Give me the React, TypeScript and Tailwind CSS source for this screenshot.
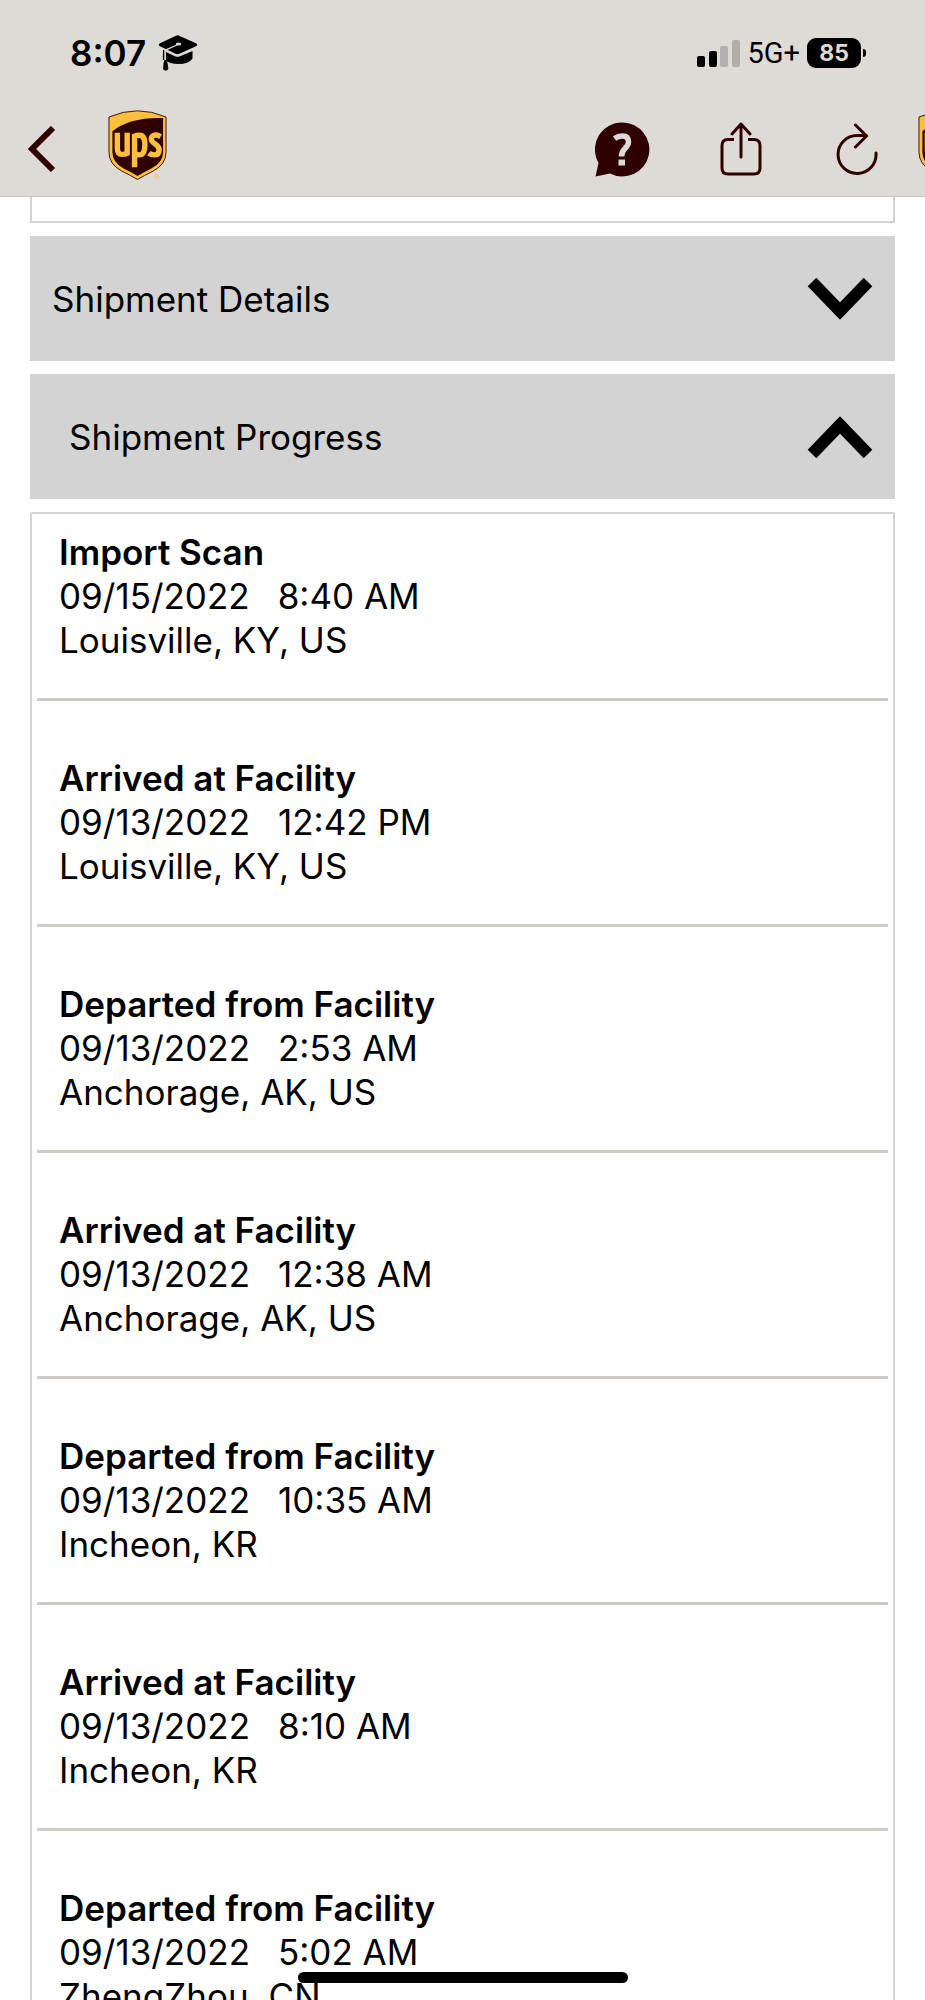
const events = [
  { title: "Import Scan", date: "09/15/2022", time: "8:40 AM", place: "Louisville, KY, US" },
  { title: "Arrived at Facility", date: "09/13/2022", time: "12:42 PM", place: "Louisville, KY, US" },
  { title: "Departed from Facility", date: "09/13/2022", time: "2:53 AM", place: "Anchorage, AK, US" },
  { title: "Arrived at Facility", date: "09/13/2022", time: "12:38 AM", place: "Anchorage, AK, US" },
  { title: "Departed from Facility", date: "09/13/2022", time: "10:35 AM", place: "Incheon, KR" },
  { title: "Arrived at Facility", date: "09/13/2022", time: "8:10 AM", place: "Incheon, KR" },
  { title: "Departed from Facility", date: "09/13/2022", time: "5:02 AM", place: "ZhengZhou, CN" },
];

function Shield({ className }: { className: string }) {
  return (
    <svg viewBox="0 0 60 72" className={className} aria-label="UPS">
      <path
        d="M1 7 Q30 -5.500 59 7 V43 Q59 55 46 62 Q36 67 30 70.500 Q24 67 14 62 Q1 55 1 43 Z"
        fill="#f9bf3f"
        stroke="#3b1512"
        strokeWidth="1"
      />
      <path
        d="M4.500 21.500 Q22 7 56 8 V43 Q56 53 44 59.500 Q36 63.500 30 67 Q24 63.500 16 59.500 Q4.500 53 4.500 43 Z"
        fill="#300000"
      />
      <g fill="none" stroke="#f9bf3f" strokeWidth="5.500">
        <path d="M9.500 23 V39 Q9.500 45 14.500 45 Q17.500 45 19.500 44 V23" />
        <path d="M27 58 V26.500 Q29 25.500 32 25.500 Q37.500 25.500 37.500 35 Q37.500 45.500 32 45.500 Q30 45.500 28 44.500" />
        <path d="M53.500 27 Q50 25 47.500 25.500 Q44 26.500 44 29.500 Q44 32 48 34.500 Q52 37 52 40.500 Q52 45.500 47 45.500 Q43.500 45.500 41.500 43.800" />
      </g>
      <circle cx="49.500" cy="67.500" r="2.200" fill="none" stroke="#f3c766" />
      <circle cx="49.500" cy="67.500" r="0.900" fill="#f3c766" />
    </svg>
  );
}

function SectionChevron({ open }: { open: boolean }) {
  return (
    <svg viewBox="0 0 66 42" className="h-[42px] w-[66px]" fill="none" stroke="#000" strokeWidth="12" aria-hidden="true">
      {open ? <path d="M5 38 L33 9 L61 38" /> : <path d="M5 4 L33 33 L61 4" />}
    </svg>
  );
}

function StatusBar() {
  return (
    <div className="flex h-[106px] items-center justify-between pr-[59px] pl-[70px]">
      <div className="flex items-center gap-3">
        <span className="text-[35px] leading-none font-semibold">8:07</span>
        <svg viewBox="0 0 40 36" className="h-9 w-10" aria-hidden="true">
          <path d="M20 0.300 L38.500 8.500 Q40 9.800 38.500 11 L21.500 18.800 Q19.500 19.600 17.500 18.800 L1.500 11 Q0 9.800 1.500 8.500 L18 0.800 Q19 0.300 20 0.300Z" />
          <path d="M8 17 L17.500 21.500 Q19.500 22.300 21.500 21.500 L34.500 16 V23.500 Q31 29 20 29 Q13 29 8 26Z" />
          <ellipse cx="20.500" cy="9" rx="2.800" ry="1.600" fill="#dedbd6" />
          <path d="M20 9.500 L8 14.800 Q7 15.500 7 17 V25" fill="none" stroke="#dedbd6" strokeWidth="1.300" />
          <path d="M5 15 H6.300 V25 H4.800Z M8 25 Q10.500 28 10.300 34 Q8 37 5.200 34.500 Q5 28 6.500 25Z" />
        </svg>
      </div>
      <div className="flex items-center gap-[7px]">
        <svg viewBox="0 0 43 27" className="h-[27px] w-[43px]" aria-hidden="true">
          <rect x="0" y="16" width="8" height="11" rx="2" />
          <rect x="12" y="11" width="8" height="16" rx="2" />
          <rect x="23" y="6" width="8" height="21" rx="2" fill="#b2aeab" />
          <rect x="35" y="0" width="8" height="27" rx="2" fill="#b2aeab" />
        </svg>
        <span className="font-[Roboto,sans-serif] text-[29px] leading-none">5G+</span>
        <div className="flex items-center gap-[2px]">
          <span className="flex h-[30px] w-[54px] items-center justify-center rounded-[9px] bg-black text-[23px] leading-none font-bold text-[#dedbd6]">
            85
          </span>
          <span className="h-2 w-[3px] rounded-r-full bg-black" />
        </div>
      </div>
    </div>
  );
}

function NavBar() {
  return (
    <nav className="flex h-[90px] items-center justify-between overflow-hidden pb-1 pl-7 text-[#300000]">
      <div className="flex items-center gap-[52px]">
        <button aria-label="Back">
          <svg viewBox="0 0 28 46" className="block h-[46px] w-7" fill="none" stroke="currentColor" strokeWidth="6">
            <path d="M25 2 L4 23 L25 44" />
          </svg>
        </button>
        <Shield className="mb-2 h-[71px] w-[59px]" />
      </div>
      <div className="flex items-center">
        <button aria-label="Help" className="mr-[70px]">
          <svg viewBox="0 0 55 55" className="block h-[55px] w-[55px]" fill="currentColor">
            <path d="M27.500 0.500 A27 27 0 1 1 15 51.500 L0.500 54.500 L3.500 41 A27 27 0 0 1 27.500 0.500Z" />
            <path d="M19.500 16.500 Q23 14 27.500 14 Q33.500 14 33.500 20 Q33.500 23 30 26.500 Q26.500 30 26.500 34.500" fill="none" stroke="#dedbd6" strokeWidth="5.500" />
            <rect x="23.500" y="37.500" width="6.500" height="6" fill="#dedbd6" />
          </svg>
        </button>
        <button aria-label="Share" className="mr-[74px]">
          <svg viewBox="0 0 42 54" className="block h-[54px] w-[42px]" fill="none" stroke="currentColor" strokeWidth="3" strokeLinejoin="round">
            <path d="M14 17.500 H8 Q2 17.500 2 23.500 V46 Q2 52 8 52 H34 Q40 52 40 46 V23.500 Q40 17.500 34 17.500 H28" />
            <path d="M21 35 V2 M12 12 L21 2 L30 12" strokeLinecap="round" />
          </svg>
        </button>
        <button aria-label="Refresh" className="mr-10">
          <svg viewBox="0 0 42 52" className="block h-[52px] w-[42px]" fill="none" stroke="currentColor" strokeWidth="3" strokeLinejoin="round" strokeLinecap="round">
            <path d="M40 30 A19 19 0 1 1 21 12.500 H30" />
            <path d="M19.500 2 L30.500 13 L19.500 24" />
          </svg>
        </button>
        <div className="mb-2 w-[7px] overflow-hidden">
          <Shield className="h-[71px] w-[59px]" />
        </div>
      </div>
    </nav>
  );
}

export default function App() {
  return (
    <div className="relative flex h-screen flex-col overflow-hidden bg-white font-[Inter,sans-serif] text-black">
      <header className="shrink-0 border-b border-[#c6c3c1] bg-[#dedbd6]">
        <StatusBar />
        <NavBar />
      </header>
      <main className="flex min-h-0 flex-1 flex-col gap-[13px] overflow-y-auto px-[30px] text-[35px] leading-[44px] [scrollbar-width:none]">
        <div className="h-[26px] shrink-0 border-2 border-t-0 border-[#d3d3d3]" />
        <button aria-expanded="false" className="flex h-[125px] shrink-0 items-center justify-between bg-[#d3d3d3] pr-[22px] pl-[22px]">
          <span>Shipment Details</span>
          <SectionChevron open={false} />
        </button>
        <button aria-expanded="true" className="flex h-[125px] shrink-0 items-center justify-between bg-[#d3d3d3] pr-[22px] pl-[39px]">
          <span>Shipment Progress</span>
          <SectionChevron open />
        </button>
        <ul className="shrink-0 rounded-[2px] border-2 border-[#d3d3d3] px-[5px]">
          {events.map((e, i) => (
            <li key={i} className="border-b-3 border-[#cfcbc5] px-[22px] pt-[55px] pb-[36px] first:pt-4">
              <h2 className="font-semibold">{e.title}</h2>
              <p className="flex gap-7">
                <span>{e.date}</span>
                <span>{e.time}</span>
              </p>
              <p>{e.place}</p>
            </li>
          ))}
        </ul>
      </main>
      <div className="absolute bottom-[17px] left-1/2 h-[11px] w-[330px] -translate-x-1/2 rounded-full bg-black" />
    </div>
  );
}
